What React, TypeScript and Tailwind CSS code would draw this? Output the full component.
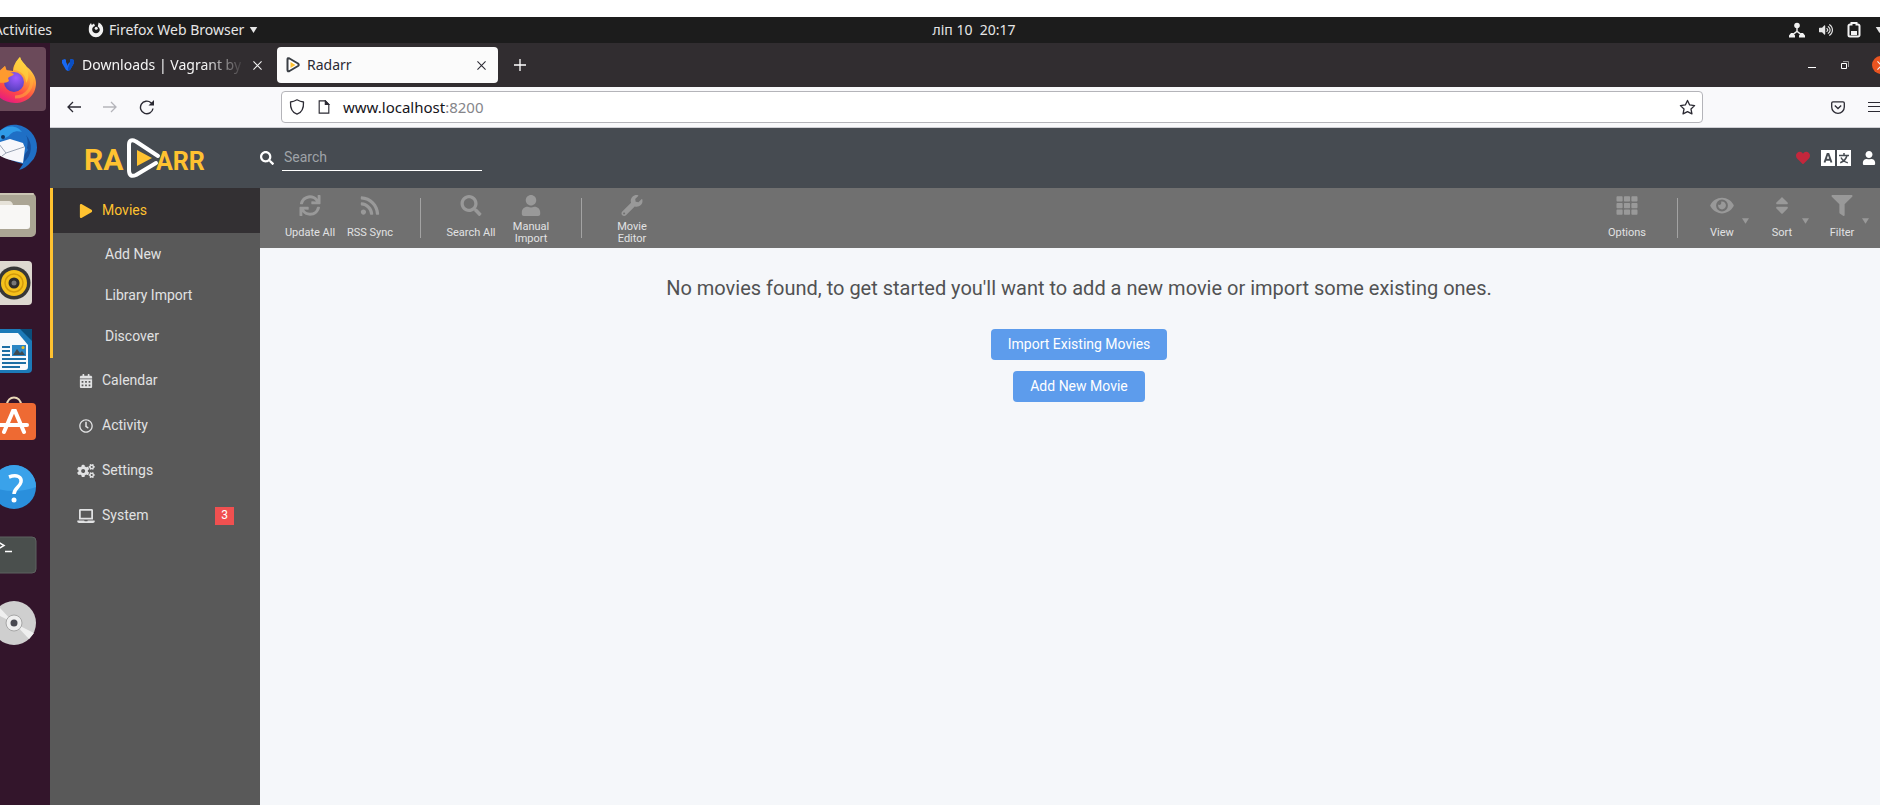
import React from 'react';
import {
  FaPlay, FaCalendarAlt, FaRegClock, FaCogs, FaLaptop, FaSearch, FaHeart, FaUser,
  FaSync, FaRss, FaWrench, FaTh, FaEye, FaSort, FaFilter, FaVolumeUp,
} from 'react-icons/fa';
import type { IconType } from 'react-icons';

function Caret({ className }: { className?: string }) {
  return (
    <svg viewBox="0 0 10 8" className={className} fill="currentColor" aria-hidden="true">
      <path d="M0 0h10L5 8z" />
    </svg>
  );
}

function TopBar() {
  return (
    <header className="flex h-[26px] shrink-0 items-center bg-[#1c1c1c] font-['Noto_Sans',sans-serif] text-[14px] leading-5 text-[#e6e6e6]">
      <div className="flex flex-1 items-center pr-[68px]">
        <button className="flex w-[52px] justify-end overflow-hidden">Activities</button>
        <button className="ml-9 flex items-center gap-[5px]">
          <svg viewBox="0 0 16 16" className="size-4" aria-hidden="true">
            <path fill="#f2f2f2" d="M1.2 3.4 3 1l.8 2L6 1.4 7 4c-2 .4-3 2-2.800 4 .2 2 1.800 3.200 3.800 3.200S11.600 10 11.800 8c0-1.600-.8-2.800-2-3.600L10.600.6c3 1.200 4.800 4 4.600 7.400-.2 4-3.400 7.200-7.200 7.200S.8 12 .8 8c0-1.600 0-3.200.4-4.600z" />
            <circle cx="8.200" cy="6.200" r="1.500" fill="#f2f2f2" />
          </svg>
          <span>Firefox Web Browser</span>
          <Caret className="h-[6px] w-[9px]" />
        </button>
      </div>
      <button className="whitespace-pre">ліп 10&nbsp; 20:17</button>
      <div className="flex flex-1 items-center justify-end gap-[14px] overflow-hidden">
        <svg viewBox="0 0 16 16" className="size-4" fill="#f2f2f2" aria-hidden="true">
          <circle cx="8" cy="3.500" r="2.800" />
          <path d="M7.300 5h1.400v4l4 3-.8 1.200L8 10.200l-3.900 3-.8-1.200 4-3z" />
          <path d="M0 15.500v-2l2-2.500h2l2 2.500v2zM10 15.500v-2l2-2.500h2l2 2.500v2z" />
        </svg>
        <FaVolumeUp className="size-[14px]" />
        <svg viewBox="0 0 14 16" className="h-4 w-[14px]" aria-hidden="true">
          <path fill="none" stroke="#f2f2f2" strokeWidth="2" d="M3 2.500h1.500V1h5v1.500H11A1.500 1.500 0 0 1 12.500 4v9A1.500 1.500 0 0 1 11 14.500H3A1.500 1.500 0 0 1 1.500 13V4A1.500 1.500 0 0 1 3 2.500z" />
          <path fill="#f2f2f2" d="M4 9h6v4H4z" />
        </svg>
        <Caret className="-mr-1 h-[6px] w-[9px]" />
      </div>
    </header>
  );
}

const dockIcons: { name: string; art: React.ReactNode }[] = [
  {
    name: 'Firefox',
    art: (
      <>
        <defs>
          <linearGradient id="ff" x1="0.75" y1="0" x2="0.3" y2="1">
            <stop offset="0" stopColor="#fff44f" />
            <stop offset="0.35" stopColor="#ffa436" />
            <stop offset="0.7" stopColor="#ff4a45" />
            <stop offset="1" stopColor="#e31587" />
          </linearGradient>
          <radialGradient id="ffg" cx="0.6" cy="0.3" r="0.8">
            <stop offset="0" stopColor="#a05cff" />
            <stop offset="1" stopColor="#4a3bb5" />
          </radialGradient>
        </defs>
        <path fill="url(#ff)" d="M28 0c1 4 4 6 7 10 5 4 9 10 9 16 0 12-9 20-21 20S0 37 0 25c0-7 2-13 5-16l2 5 6-5 1 4 7 1c0-5 3-10 7-14z" />
        <circle cx="22" cy="25" r="10" fill="url(#ffg)" />
        <path fill="#ff9a2e" d="M3 12l4 3 6-6 2 5 7 3c-1 2-4 2-6 4l1 3c-4 3-8 1-11 2-3-4-4-9-3-14z" />
        <path fill="#ffcf3d" fillOpacity=".75" d="M28 0c1 5 7 8 8 15 1 5 0 8-2 11 0-7-4-12-12-13 0-5 3-9 6-13z" />
        <path fill="none" stroke="#ffb13b" strokeOpacity=".55" strokeWidth="3" d="M39 18c3 12-4 22-16 22" />
      </>
    ),
  },
  {
    name: 'Thunderbird',
    art: (
      <>
        <path fill="#1f6fc5" d="M10 4C18-3 32-1 39 7c8 9 8 22 0 30-3 4-8 7-12 8l4-6C20 36 8 32 0 24c0-9 4-15 10-20z" />
        <path fill="#2f9be8" d="M9 5c8-6 17-4 21 2-7-2-11 1-13 4L3 18c0-5 2-10 6-13z" />
        <path fill="#174f9b" d="M34 10c7 8 7 20-3 28l2-9 3-4-1-2c1-5 1-9-1-13z" />
        <path fill="#f7f7fb" d="M8 17l10-3 13 4 2 5-2 15C22 36 9 34 2 26z" />
        <path fill="none" stroke="#9aa4b4" strokeWidth="1" d="M7 19l7 9 18-6M14 28l-4 3" />
        <circle cx="11" cy="12" r="2" fill="#0f2f5c" />
      </>
    ),
  },
  {
    name: 'Files',
    art: (
      <>
        <rect x="-4" y="0" width="48" height="44" rx="5" fill="#aba594" />
        <rect x="-4" y="0" width="46" height="2" rx="1" fill="#cbc5b4" />
        <path fill="#e6e2d8" d="M2 11q0-3 3-3h12q3 0 4 4v6H2z" />
        <rect x="0" y="12" width="38" height="24" rx="3" fill="#f8f7f5" />
      </>
    ),
  },
  {
    name: 'Rhythmbox',
    art: (
      <>
        <rect x="0" y="0" width="40" height="44" rx="4" fill="#ddd8d0" />
        <circle cx="22" cy="22" r="16.500" fill="#373737" />
        <circle cx="22" cy="22" r="13" fill="#f5c11c" />
        <circle cx="22" cy="22" r="9" fill="none" stroke="#d29a0b" strokeWidth="1.500" />
        <circle cx="22" cy="22" r="5.500" fill="#2c2c2c" />
        <circle cx="22" cy="22" r="2.500" fill="#777" />
      </>
    ),
  },
  {
    name: 'LibreOffice Writer',
    art: (
      <>
        <path fill="#1c7ab8" d="M4 0h36v40q0 4-4 4H4z" />
        <path fill="#0b4e7b" d="M28 0h12v12z" />
        <path fill="#f8fafc" d="M4 4h22l10 12v22q0 3-3 3H4z" />
        <path fill="#1d6fa5" d="M10 17h8v2h-8zM10 21h8v2h-8zM10 25h8v2h-8zM10 29h24v2H10zM10 33h24v2H10zM10 37h18v2H10z" />
        <rect x="20" y="16" width="14" height="11" fill="#2b86c4" />
        <path fill="#3f4a50" d="M21 26l4-6 3 4 2-2 3 4z" />
        <circle cx="31" cy="18.500" r="1.500" fill="#f5c11c" />
      </>
    ),
  },
  {
    name: 'Ubuntu Software',
    art: (
      <>
        <path fill="none" stroke="#ead9b8" strokeWidth="2" d="M15 8C15-2 29-2 29 8" />
        <rect x="-2" y="6" width="46" height="37" rx="4" fill="#ee6a33" />
        <path fill="none" stroke="#fff" strokeWidth="4" strokeLinecap="round" d="M12 35 21 14h2l9 21M8 28h27" />
      </>
    ),
  },
  {
    name: 'Help',
    art: (
      <>
        <circle cx="22" cy="22" r="22" fill="#2a8fdc" />
        <path fill="#3aa2ea" d="M0 22a22 22 0 0 1 44 0q-22 8-44 0z" />
        <path fill="none" stroke="#fff" strokeWidth="3.500" d="M17 12c8-3 13 0 12 5-1 5-7 6-7 12" />
        <circle cx="22" cy="35" r="2.500" fill="#fff" />
      </>
    ),
  },
  {
    name: 'Terminal',
    art: (
      <>
        <rect x="-4" y="4" width="48" height="36" rx="4" fill="#4a4f4d" stroke="#5d6360" />
        <path fill="none" stroke="#fff" strokeWidth="1.500" d="M6 9l6 3.500L6 16M13 18.500h7" />
      </>
    ),
  },
  {
    name: 'Disc',
    art: (
      <>
        <circle cx="22" cy="22" r="22" fill="#cfcfcf" />
        <path fill="#efefef" d="M22 22 2 12l5-6zM22 22l20 10-5 6z" />
        <circle cx="22" cy="22" r="8" fill="#efefef" stroke="#a7a7a7" />
        <circle cx="22" cy="22" r="3.500" fill="#4a4a52" />
      </>
    ),
  },
];

function Dock() {
  return (
    <nav aria-label="Dock" className="flex w-[50px] shrink-0 flex-col gap-1 overflow-hidden bg-[#33152b] pt-1">
      {dockIcons.map((icon, i) => (
        <button
          key={icon.name}
          aria-label={icon.name}
          className={
            i === 0
              ? 'flex h-16 w-[46px] shrink-0 items-center rounded-r bg-[#6b4a5a]'
              : 'flex h-16 w-[46px] shrink-0 items-center'
          }
        >
          <svg viewBox="0 0 44 44" className="-ml-2 size-11 shrink-0 overflow-visible" aria-hidden="true">
            {icon.art}
          </svg>
        </button>
      ))}
    </nav>
  );
}

function Cross() {
  return (
    <svg viewBox="0 0 10 10" className="size-[9px]" stroke="currentColor" strokeWidth="1.200" aria-hidden="true">
      <path d="M.5.5l9 9M9.500.5l-9 9" />
    </svg>
  );
}

function TabStrip() {
  return (
    <div className="flex h-11 shrink-0 items-center bg-[#312d30] font-['Noto_Sans',sans-serif] text-[14px] leading-5 text-[#f5f5f5]">
      <div className="flex h-9 w-[227px] items-center pl-3 pr-[15px]">
        <svg viewBox="0 0 12 12" className="size-3" aria-hidden="true">
          <path fill="#1868f2" d="M0 1l3-1 1 1v2l2 4V5l2-2V1l1-1 3 1v3L8 11l-2 1-2-1L0 4z" />
          <path fill="#0b4fc4" d="M8 1l1-1 3 1v3L8 11l-2 1V9l2-5z" />
        </svg>
        <a
          href="#vagrant"
          className="ml-2 min-w-0 flex-1 whitespace-nowrap [mask-image:linear-gradient(to_right,black_75%,transparent)]"
        >
          Downloads | Vagrant by
        </a>
        <button aria-label="Close tab" className="ml-2"><Cross /></button>
      </div>
      <div className="flex h-9 w-[221px] items-center rounded bg-[#fbfbfb] pl-[9px] pr-3 text-[#2b2a33]">
        <svg viewBox="0 0 14 16" className="h-4 w-[14px]" aria-hidden="true">
          <path fill="#fff" stroke="#3a3f45" strokeWidth="2" strokeLinejoin="round" d="M1.500 2.500q0-2 2-1l8.500 5q1.500 1.500 0 2.500l-8.500 5q-2 1-2-1z" />
          <path fill="#ffc230" d="M4.500 5v6l5-3z" />
        </svg>
        <a href="#radarr" className="ml-[7px] flex-1">Radarr</a>
        <button aria-label="Close tab"><Cross /></button>
      </div>
      <button aria-label="New tab" className="ml-4">
        <svg viewBox="0 0 12 12" className="size-3" stroke="#fff" strokeWidth="1.300" aria-hidden="true">
          <path d="M6 0v12M0 6h12" />
        </svg>
      </button>
      <div className="flex flex-1 items-center justify-end gap-[22px] overflow-hidden">
        <button aria-label="Minimize">
          <svg viewBox="0 0 12 12" className="size-3" aria-hidden="true"><path fill="#fff" d="M2 8h8v1H2z" /></svg>
        </button>
        <button aria-label="Restore">
          <svg viewBox="0 0 10 10" className="size-[10px]" fill="none" aria-hidden="true">
            <path stroke="#fff" d="M1.500 3.500h5v5h-5z" />
            <path stroke="#999" d="M3 1.500h5.500V7" />
          </svg>
        </button>
        <button aria-label="Close" className="-mr-[10px] flex size-[18px] items-center justify-center rounded-full bg-[#e95420]">
          <Cross />
        </button>
      </div>
    </div>
  );
}

function AddressRow() {
  return (
    <div className="flex h-[41px] shrink-0 items-center border-b border-[#cfcfd4] bg-[#f9f9fb] text-[#2b2a33]">
      <div className="flex w-[231px] items-center gap-[22px] pl-[17px]">
        <button aria-label="Back">
          <svg viewBox="0 0 14 12" className="h-3 w-[14px]" fill="none" stroke="#2b2a33" strokeWidth="1.300" aria-hidden="true">
            <path d="M14 6H1M6 1L1 6l5 5" />
          </svg>
        </button>
        <button aria-label="Forward">
          <svg viewBox="0 0 14 12" className="h-3 w-[14px]" fill="none" stroke="#b5b5ba" strokeWidth="1.300" aria-hidden="true">
            <path d="M0 6h13M8 1l5 5-5 5" />
          </svg>
        </button>
        <button aria-label="Reload">
          <svg viewBox="0 0 16 16" className="size-4" fill="none" stroke="#2b2a33" strokeWidth="1.400" aria-hidden="true">
            <path d="M14 9.500A6.300 6.300 0 1 1 12 3.800l2 1.800" />
            <path fill="#2b2a33" stroke="none" d="M15 1v5.500H9.500z" />
          </svg>
        </button>
      </div>
      <div className="flex h-8 flex-1 items-center rounded border border-[#b4b4b9] bg-white pl-[7px]">
        <svg viewBox="0 0 16 16" className="size-4" fill="none" stroke="#2b2a33" strokeWidth="1.300" aria-hidden="true">
          <path d="M8 .8c2 1.200 4 2 6.500 2.200.3 6-1.500 10.500-6.500 12.200C3 13.500 1.200 9 1.500 3 4 2.800 6 2 8 .8z" strokeLinejoin="round" />
        </svg>
        <svg viewBox="0 0 14 16" className="ml-3 h-[14px] w-[14px]" fill="none" stroke="#2b2a33" strokeWidth="1.300" aria-hidden="true">
          <path d="M1.500 1h7L12.500 5v10h-11z" />
          <path fill="#2b2a33" d="M8.500 1v4h4z" />
        </svg>
        <div className="ml-3 flex-1 font-['Noto_Sans',sans-serif] text-[15px] leading-5 text-[#15141a]">
          www.localhost<span className="text-[#85858a]">:8200</span>
        </div>
        <button aria-label="Bookmark" className="mr-[6px]">
          <svg viewBox="0 0 18 18" className="size-[17px]" fill="none" stroke="#2b2a33" strokeWidth="1.400" strokeLinejoin="round" aria-hidden="true">
            <path d="M9 1.500l2.300 4.800 5.200.7-3.800 3.600 1 5.200L9 13.300l-4.700 2.500 1-5.200L1.500 7l5.200-.7z" />
          </svg>
        </button>
      </div>
      <div className="flex w-[177px] items-center justify-end gap-[23px] overflow-hidden">
        <button aria-label="Save to Pocket">
          <svg viewBox="0 0 14 13" className="h-[13px] w-[14px]" fill="none" stroke="#2b2a33" strokeWidth="1.300" aria-hidden="true">
            <path d="M2 .8h10q1.300 0 1.300 1.300V6a6.300 6.300 0 0 1-12.600 0V2.100Q.7.8 2 .8z" />
            <path d="M3.800 4.500L7 7.500l3.200-3" />
          </svg>
        </button>
        <button aria-label="Open menu" className="-mr-[2px]">
          <svg viewBox="0 0 14 12" className="h-3 w-[14px]" fill="#2b2a33" aria-hidden="true">
            <path d="M0 1h14v1H0zM0 5h14v1H0zM0 10h14v1H0z" />
          </svg>
        </button>
      </div>
    </div>
  );
}

function Logo() {
  return (
    <a href="#home" aria-label="Radarr" className="flex w-[210px] items-center pl-[34px]">
      <svg viewBox="0 0 122 42" className="h-[42px] w-[122px]" aria-hidden="true">
        <g fill="#ffc230" className="font-['Roboto',sans-serif] text-[30px] font-bold">
          <text x="0" y="33">RA</text>
          <text x="72" y="33" className="text-[25px]">ARR</text>
        </g>
        <path fill="none" stroke="#fff" strokeWidth="4" strokeLinejoin="round" strokeLinecap="round" d="M74 19 52 4.500Q45 1 45 8v25q0 8 7 5l20-12" />
        <path fill="#ffc230" d="M53 13v16l15-8z" />
      </svg>
    </a>
  );
}

function AppHeader() {
  return (
    <div className="flex h-[60px] shrink-0 items-center bg-[#464b51] text-white">
      <Logo />
      <label className="flex items-center">
        <FaSearch className="size-[14px]" />
        <input
          aria-label="Search"
          placeholder="Search"
          className="ml-2 h-[25px] w-[200px] border-b border-white bg-transparent pb-[2px] pl-[2px] text-[14px] outline-none placeholder:text-[#9fa3a8]"
        />
      </label>
      <div className="flex flex-1 items-center justify-end gap-[11px] pr-1">
        <button aria-label="Donate" className="text-[#c4273c]"><FaHeart className="size-[14px]" /></button>
        <button aria-label="Language">
          <svg viewBox="0 0 30 16" className="h-4 w-[30px]" aria-hidden="true">
            <path fill="#fff" d="M0 0h14v16H0zM16 0h14v16H16z" />
            <path fill="none" stroke="#464b51" strokeWidth="1.900" d="M3.500 12.500 6.500 4h1l3 8.500M4.500 9.800h5" />
            <path fill="none" stroke="#464b51" strokeWidth="1.500" d="M18 5.500h10M23 3v2.500M26 5.500c-.8 3.500-3.300 6-6.800 7.200M20 7.500c1.300 2.600 3.600 4.500 6.800 5.200" />
          </svg>
        </button>
        <button aria-label="Menu"><FaUser className="size-[14px]" /></button>
      </div>
    </div>
  );
}

function NavItem({ icon: Icon, label, badge }: { icon: IconType; label: string; badge?: string }) {
  return (
    <a href={'#' + label.toLowerCase()} className="flex h-[45px] items-center border-l-[3px] border-transparent pl-6 pr-[26px]">
      <span className="flex w-[18px] justify-center"><Icon className="h-[14px] w-[18px]" /></span>
      <span className="ml-[7px] flex-1">{label}</span>
      {badge && (
        <span className="flex h-[18px] w-[19px] items-center justify-center bg-[#f05050] text-[12px] text-white">{badge}</span>
      )}
    </a>
  );
}

function Sidebar() {
  return (
    <nav aria-label="Main" className="w-[210px] shrink-0 bg-[#595959] text-[14px] leading-[21px] text-[#e1e2e3]">
      <div className="border-l-[3px] border-[#ffc230] pb-px">
        <a href="#movies" className="mb-px flex h-[45px] items-center bg-[#333033] pl-6 text-[#ffc230]">
          <span className="flex w-[18px] justify-center"><FaPlay className="size-[14px]" /></span>
          <span className="ml-[7px]">Movies</span>
        </a>
        {['Add New', 'Library Import', 'Discover'].map((label) => (
          <a key={label} href="#movies" className="flex h-[41px] items-center pl-[52px]">{label}</a>
        ))}
      </div>
      <NavItem icon={FaCalendarAlt} label="Calendar" />
      <NavItem icon={FaRegClock} label="Activity" />
      <NavItem icon={FaCogs} label="Settings" />
      <NavItem icon={FaLaptop} label="System" badge="3" />
    </nav>
  );
}

function ToolButton({ icon: Icon, label, menu }: { icon: IconType; label: string; menu?: boolean }) {
  return (
    <button className="relative flex w-[60px] flex-col items-center pt-[7px]">
      <Icon className="h-[21px] w-6 text-[#999]" />
      <span className="mt-[5px] flex h-6 items-center px-2 text-[11px] leading-3">
        <span className={label === 'Manual Import' || label === 'Movie Editor' ? 'w-10' : 'whitespace-nowrap'}>{label}</span>
      </span>
      {menu && <Caret className="absolute right-[3px] top-[30px] h-[6px] w-[7px] text-[#999]" />}
    </button>
  );
}

function Separator({ tight }: { tight?: boolean }) {
  return <div className={tight ? 'my-[10px] ml-5 mr-[14px] w-px bg-[#a3a3a3]' : 'mx-5 my-[10px] w-px bg-[#a3a3a3]'} />;
}

function Toolbar() {
  return (
    <div className="flex h-[60px] justify-between bg-[#707070] pl-5 pr-2 text-[#e1e2e3]">
      <div className="flex">
        <ToolButton icon={FaSync} label="Update All" />
        <ToolButton icon={FaRss} label="RSS Sync" />
        <Separator />
        <ToolButton icon={FaSearch} label="Search All" />
        <ToolButton icon={FaUser} label="Manual Import" />
        <Separator />
        <ToolButton icon={FaWrench} label="Movie Editor" />
      </div>
      <div className="flex">
        <ToolButton icon={FaTh} label="Options" />
        <Separator tight />
        <ToolButton icon={FaEye} label="View" menu />
        <ToolButton icon={FaSort} label="Sort" menu />
        <ToolButton icon={FaFilter} label="Filter" menu />
      </div>
    </div>
  );
}

export default function App() {
  return (
    <div className="flex h-screen flex-col overflow-hidden bg-white pt-[17px]">
      <TopBar />
      <div className="flex min-h-0 flex-1">
        <Dock />
        <div className="flex min-w-0 flex-1 flex-col">
          <TabStrip />
          <AddressRow />
          <div className="flex min-h-0 flex-1 flex-col font-['Roboto',sans-serif]">
            <AppHeader />
            <div className="flex min-h-0 flex-1">
              <Sidebar />
              <main className="min-w-0 flex-1 bg-[#f5f7fa]">
                <Toolbar />
                <div className="flex flex-col items-center pl-[18px] pt-[25px]">
                  <p className="text-[20px] leading-[30px] text-[#515253]">
                    No movies found, to get started you'll want to add a new movie or import some existing ones.
                  </p>
                  <button className="mt-[26px] h-[31px] rounded bg-[#5d9cec] px-[17px] text-[14px] text-white">
                    Import Existing Movies
                  </button>
                  <button className="mt-[11px] h-[31px] rounded bg-[#5d9cec] px-[17px] text-[14px] text-white">
                    Add New Movie
                  </button>
                </div>
              </main>
            </div>
          </div>
        </div>
      </div>
    </div>
  );
}
